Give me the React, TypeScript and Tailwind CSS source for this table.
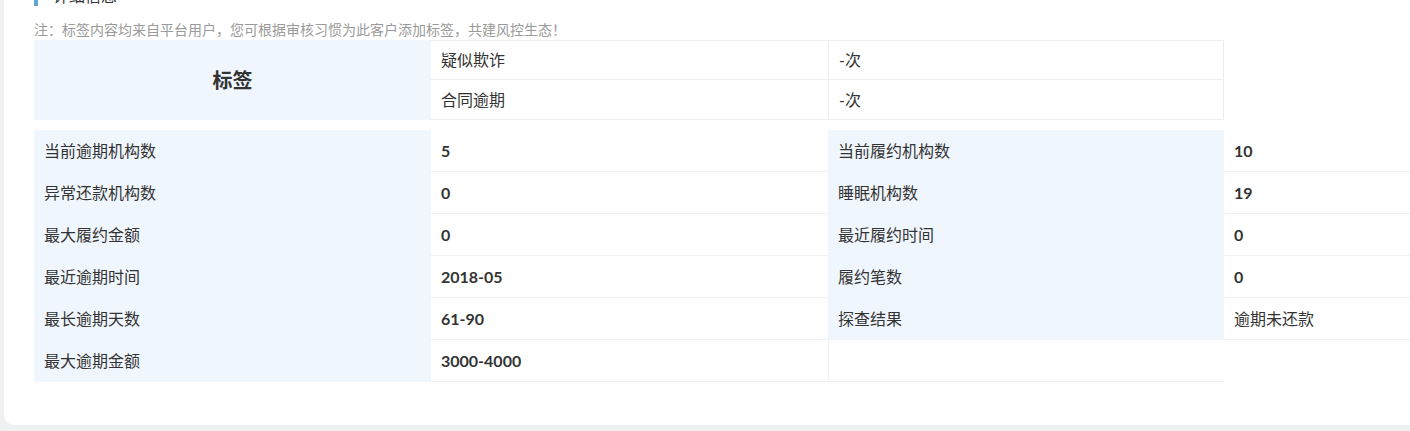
import React from "react";

const font = { fontFamily: "Lato, 'Noto Sans CJK SC', sans-serif" };

const rows: [string, string, string | null, string | null][] = [
  ["当前逾期机构数", "5", "当前履约机构数", "10"],
  ["异常还款机构数", "0", "睡眠机构数", "19"],
  ["最大履约金额", "0", "最近履约时间", "0"],
  ["最近逾期时间", "2018-05", "履约笔数", "0"],
  ["最长逾期天数", "61-90", "探查结果", "逾期未还款"],
  ["最大逾期金额", "3000-4000", null, null],
];

export default function App() {
  return (
    <div
      className="w-[1410px] h-[431px] overflow-hidden bg-[#eef0f1] pl-[4px] pb-[6px] text-[#333]"
      style={font}
    >
      <div className="h-full bg-white rounded-bl-[10px] pl-[30px] overflow-hidden">
        <div className="mt-[-14px] flex items-center h-[20px]">
          <div className="w-[4px] h-[18px] bg-[#5fa8d6] mt-[2px]" />
          <div className="ml-[15px] text-[16px] leading-[20px] text-[#333]">详细信息</div>
        </div>
        <div className="mt-[14px] h-[20px] text-[14px] leading-[20px] text-[#9a9a9a]">
          注：标签内容均来自平台用户，您可根据审核习惯为此客户添加标签，共建风控生态！
        </div>
        <div className="grid grid-cols-[397px_397px_396px] grid-rows-[40px_40px] w-[1190px]">
          <div className="row-span-2 bg-[#f0f6fe] flex items-center justify-center text-[20px] font-bold text-[#333]">
            标签
          </div>
          <div className="border-t border-b border-[#eeeeee] flex items-center pl-[10px] text-[16px]">疑似欺诈</div>
          <div className="border-t border-b border-l border-r border-[#eeeeee] flex items-center pl-[10px] text-[16px]">-次</div>
          <div className="border-b border-[#eeeeee] flex items-center pl-[10px] text-[16px]">合同逾期</div>
          <div className="border-b border-l border-r border-[#eeeeee] flex items-center pl-[10px] text-[16px]">-次</div>
        </div>
        <div className="mt-[10px] grid grid-cols-[397px_397px_396px_1fr] auto-rows-[42px]">
          {rows.map(([l1, v1, l2, v2], i) => (
            <React.Fragment key={i}>
              <div className="bg-[#f0f6fe] flex items-center pl-[10px] text-[16px]">{l1}</div>
              <div className="border-b border-[#f0f0f0] flex items-center pl-[10px] text-[16px] font-bold">{v1}</div>
              {l2 ? (
                <div className="bg-[#f0f6fe] flex items-center pl-[10px] text-[16px]">{l2}</div>
              ) : (
                <div className="border-l border-b border-[#f0f0f0]" />
              )}
              {v2 ? (
                <div
                  className={`border-b border-[#f0f0f0] flex items-center pl-[10px] text-[16px] ${
                    /\d/.test(v2) ? "font-bold" : ""
                  }`}
                >
                  {v2}
                </div>
              ) : (
                <div />
              )}
            </React.Fragment>
          ))}
        </div>
      </div>
    </div>
  );
}
